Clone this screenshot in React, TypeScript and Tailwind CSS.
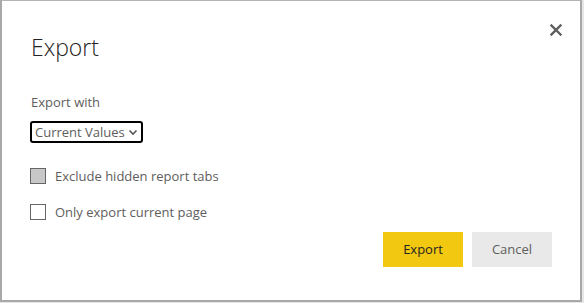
import { useState } from "react";

export default function App() {
  const [hidden, setHidden] = useState(true);
  const [current, setCurrent] = useState(false);

  return (
    <div
      className="w-[584px] h-[303px] bg-[#e6e6e6] text-[#605e5c]"
      style={{ fontFamily: '"Segoe UI", "Open Sans", sans-serif' }}
    >
      <div className="relative w-[582px] h-[302px] bg-white border-2 border-[#a8a8a8] border-t border-t-[#b4b4b4] pl-[28px] pr-[28px] pt-[30px] flex flex-col">
        {/* CLOSE */}
        <button className="absolute right-[17px] top-[22px] w-[14px] h-[14px] flex items-center justify-center">
          <svg width="12" height="12" viewBox="0 0 12 12">
            <path d="M1.5 1.5 L10.5 10.5 M10.5 1.5 L1.5 10.5" stroke="#5e5e5e" strokeWidth="2.4" strokeLinecap="square" />
          </svg>
        </button>

        {/* HEADER */}
        <h1 className="text-[23px] leading-[32px] font-light text-[#252423] pl-[1px]">Export</h1>

        <p className="mt-[30px] text-[13px] leading-[18px] pl-[1px]">Export with</p>

        <div className="mt-[8px]">
          <div className="inline-flex items-center h-[22px] border-2 border-black rounded-[3px] pl-[3px] pr-[3px] gap-[3px]">
            <span className="text-[13px] leading-[18px]">Current Values</span>
            <svg width="10" height="7" viewBox="0 0 10 7">
              <path d="M1.5 1.5 L5 5 L8.5 1.5" stroke="#555" strokeWidth="1.6" fill="none" />
            </svg>
          </div>
        </div>

        {/* OPTIONS */}
        <label className="mt-[24px] flex items-center gap-[9px] cursor-pointer" onClick={() => setHidden(!hidden)}>
          <span className={`w-[16px] h-[16px] border border-[#666] ${hidden ? "bg-[#c8c8c8]" : "bg-white"}`} />
          <span className="text-[13px] leading-[18px]">Exclude hidden report tabs</span>
        </label>

        <label className="mt-[18px] flex items-center gap-[9px] cursor-pointer" onClick={() => setCurrent(!current)}>
          <span className={`w-[16px] h-[16px] border border-[#666] ${current ? "bg-[#c8c8c8]" : "bg-white"}`} />
          <span className="text-[13px] leading-[18px]">Only export current page</span>
        </label>

        {/* ACTIONS */}
        <div className="mt-[11px] flex justify-end gap-[9px]">
          <button className="w-[80px] h-[35px] bg-[#f2c811] text-[#252423] text-[13px]">Export</button>
          <button className="w-[80px] h-[35px] bg-[#e9e9e9] text-[#605e5c] text-[13px]">Cancel</button>
        </div>
      </div>
    </div>
  );
}
